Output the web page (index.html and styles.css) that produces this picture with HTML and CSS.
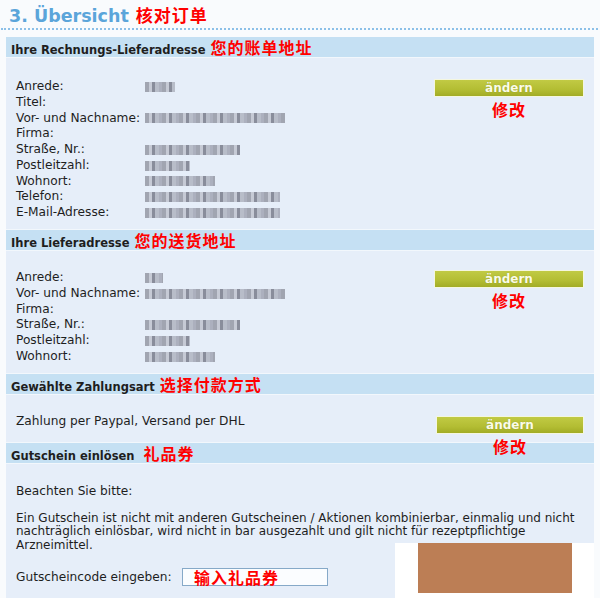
FILE: index.html
```html
<!DOCTYPE html>
<html lang="de">
<head>
<meta charset="utf-8">
<title>Übersicht</title>
<link rel="stylesheet" href="styles.css">
</head>
<body>
<div class="page">
  <div class="title-row">
    <h1 class="title">3. Übersicht</h1>
    <span class="note note-title">核对订单</span>
  </div>

  <div class="panel">
    <div class="head">Ihre Rechnungs-Lieferadresse <span class="note">您的账单地址</span></div>
    <div class="body body-1">
      <div class="rows">
        <div class="row"><span class="lbl">Anrede:</span><span class="blur" style="width:30px"></span></div>
        <div class="row"><span class="lbl">Titel:</span></div>
        <div class="row"><span class="lbl">Vor- und Nachname:</span><span class="blur" style="width:140px"></span></div>
        <div class="row"><span class="lbl">Firma:</span></div>
        <div class="row"><span class="lbl">Straße, Nr.:</span><span class="blur" style="width:95px"></span></div>
        <div class="row"><span class="lbl">Postleitzahl:</span><span class="blur" style="width:45px"></span></div>
        <div class="row"><span class="lbl">Wohnort:</span><span class="blur" style="width:70px"></span></div>
        <div class="row"><span class="lbl">Telefon:</span><span class="blur" style="width:135px"></span></div>
        <div class="row"><span class="lbl">E-Mail-Adresse:</span><span class="blur" style="width:135px"></span></div>
      </div>
      <div class="action">
        <button class="btn">ändern</button>
        <span class="note note-btn">修改</span>
      </div>
    </div>

    <div class="head">Ihre Lieferadresse <span class="note">您的送货地址</span></div>
    <div class="body body-2">
      <div class="rows">
        <div class="row"><span class="lbl">Anrede:</span><span class="blur" style="width:18px"></span></div>
        <div class="row"><span class="lbl">Vor- und Nachname:</span><span class="blur" style="width:140px"></span></div>
        <div class="row"><span class="lbl">Firma:</span></div>
        <div class="row"><span class="lbl">Straße, Nr.:</span><span class="blur" style="width:95px"></span></div>
        <div class="row"><span class="lbl">Postleitzahl:</span><span class="blur" style="width:45px"></span></div>
        <div class="row"><span class="lbl">Wohnort:</span><span class="blur" style="width:70px"></span></div>
      </div>
      <div class="action">
        <button class="btn">ändern</button>
        <span class="note note-btn">修改</span>
      </div>
    </div>

    <div class="head">Gewählte Zahlungsart <span class="note">选择付款方式</span></div>
    <div class="body body-3">
      <div class="rows">
        <div class="row">Zahlung per Paypal, Versand per DHL</div>
      </div>
      <div class="action action-3">
        <button class="btn">ändern</button>
        <span class="note note-btn">修改</span>
      </div>
    </div>

    <div class="head">Gutschein einlösen <span class="note note-wide">礼品券</span></div>
    <div class="body body-4">
      <div class="coupon">
        <p class="row">Beachten Sie bitte:</p>
        <p class="info">Ein Gutschein ist nicht mit anderen Gutscheinen / Aktionen kombinierbar, einmalig und nicht<br>nachträglich einlösbar, wird nicht in bar ausgezahlt und gilt nicht für rezeptpflichtige<br>Arzneimittel.</p>
        <div class="code-row">
          <span class="code-lbl">Gutscheincode eingeben:</span>
          <span class="code-input"><span class="note">输入礼品券</span></span>
        </div>
      </div>
      <div class="cover"><div class="cover-fill"></div></div>
    </div>
  </div>
</div>
</body>
</html>
```
FILE: styles.css
```css
html, body {
  margin: 0;
  padding: 0;
  background: #f9fbfd;
}
body {
  font-family: "DejaVu Sans", Verdana, sans-serif;
  font-size: 12.2px;
  color: #1e1e1e;
  width: 600px;
  height: 598px;
  overflow: hidden;
}
.page {
  width: 600px;
}
.title-row {
  display: flex;
  align-items: baseline;
  padding-left: 8px;
  margin: 0 2px 0 1px;
  border-bottom: 2px dotted #8cc0e8;
  box-sizing: border-box;
  height: 30px;
  padding-top: 2px;
}
.title {
  margin: 0;
  font-size: 17.5px;
  font-weight: bold;
  color: #5ba5da;
  line-height: 24px;
}
.note {
  font-family: "Noto Sans CJK SC", sans-serif;
  color: #ff0000;
  font-weight: bold;
  font-size: 16px;
  letter-spacing: 1px;
}
.note-title {
  margin-left: 7px;
  font-size: 17px;
}
.panel {
  margin: 7px 6px 0 6px;
  width: 588px;
}
.head {
  background: #c5e0f3;
  height: 20px;
  line-height: 20px;
  font-weight: bold;
  font-size: 11.5px;
  padding-left: 5px;
  border-bottom: 1px solid #f2f7fc;
  white-space: nowrap;
}
.head .note {
  margin-left: 1px;
}
.head .note-wide {
  margin-left: 5px;
}
.body {
  background: #e6eef9;
  display: flex;
  justify-content: space-between;
  padding-left: 10px;
  padding-right: 10px;
  border-bottom: 1px solid #f2f7fc;
}
.body-1 { padding-top: 21px; height: 150px; }
.body-2 { padding-top: 19px; height: 103px; }
.body-3 { padding-top: 19px; height: 28px; }
.body-4 { padding-top: 20px; height: 114px; position: relative; }
.rows {
  display: flex;
  flex-direction: column;
}
.row {
  height: 15.75px;
  line-height: 15.75px;
  display: flex;
  align-items: center;
  margin: 0;
  white-space: nowrap;
}
.lbl {
  width: 129px;
  flex: none;
}
.blur {
  display: inline-block;
  height: 10px;
  background:
    repeating-linear-gradient(90deg, #9a9eaa 0 4px, #c3c7d2 4px 7px, #7f8391 7px 10px, #b4b8c4 10px 14px, #a6aab8 14px 17px);
  filter: blur(0.7px);
  opacity: 0.9;
}
.action {
  position: relative;
  width: 150px;
  display: flex;
  flex-direction: column;
  align-items: center;
}
.action-3 {
  margin-top: 2px;
  width: 148px;
}
.btn {
  display: block;
  width: 100%;
  height: 18px;
  margin: 0;
  padding: 0;
  border: 1px solid #f4f6df;
  background: linear-gradient(#c1ca44, #b3bd33 60%, #a2ac26);
  color: #fbfce8;
  font-family: "DejaVu Sans", Verdana, sans-serif;
  font-weight: bold;
  font-size: 12px;
  line-height: 16px;
  text-shadow: 0 0 1px #8c9420;
}
.note-btn {
  position: absolute;
  top: 22px;
  left: 0;
  right: 0;
  text-align: center;
  line-height: 16px;
}
.coupon {
  display: flex;
  flex-direction: column;
}
.info {
  margin: 12px 0 0 0;
  line-height: 13.5px;
  white-space: nowrap;
  font-size: 12px;
}
.code-row {
  margin-top: 16px;
  display: flex;
  align-items: center;
}
.code-lbl {
  width: 166px;
  flex: none;
}
.code-input {
  display: block;
  box-sizing: border-box;
  width: 146px;
  height: 18px;
  border: 1px solid #86a9c8;
  background: #fbfdff;
  padding-left: 11px;
  line-height: 16px;
}
.code-input .note {
  font-size: 16px;
}
.cover {
  position: absolute;
  left: 389px;
  top: 79px;
  width: 199px;
  height: 60px;
  background: #ffffff;
}
.cover-fill {
  margin-left: 23px;
  width: 154px;
  height: 50px;
  background: #bc7e55;
}
```
